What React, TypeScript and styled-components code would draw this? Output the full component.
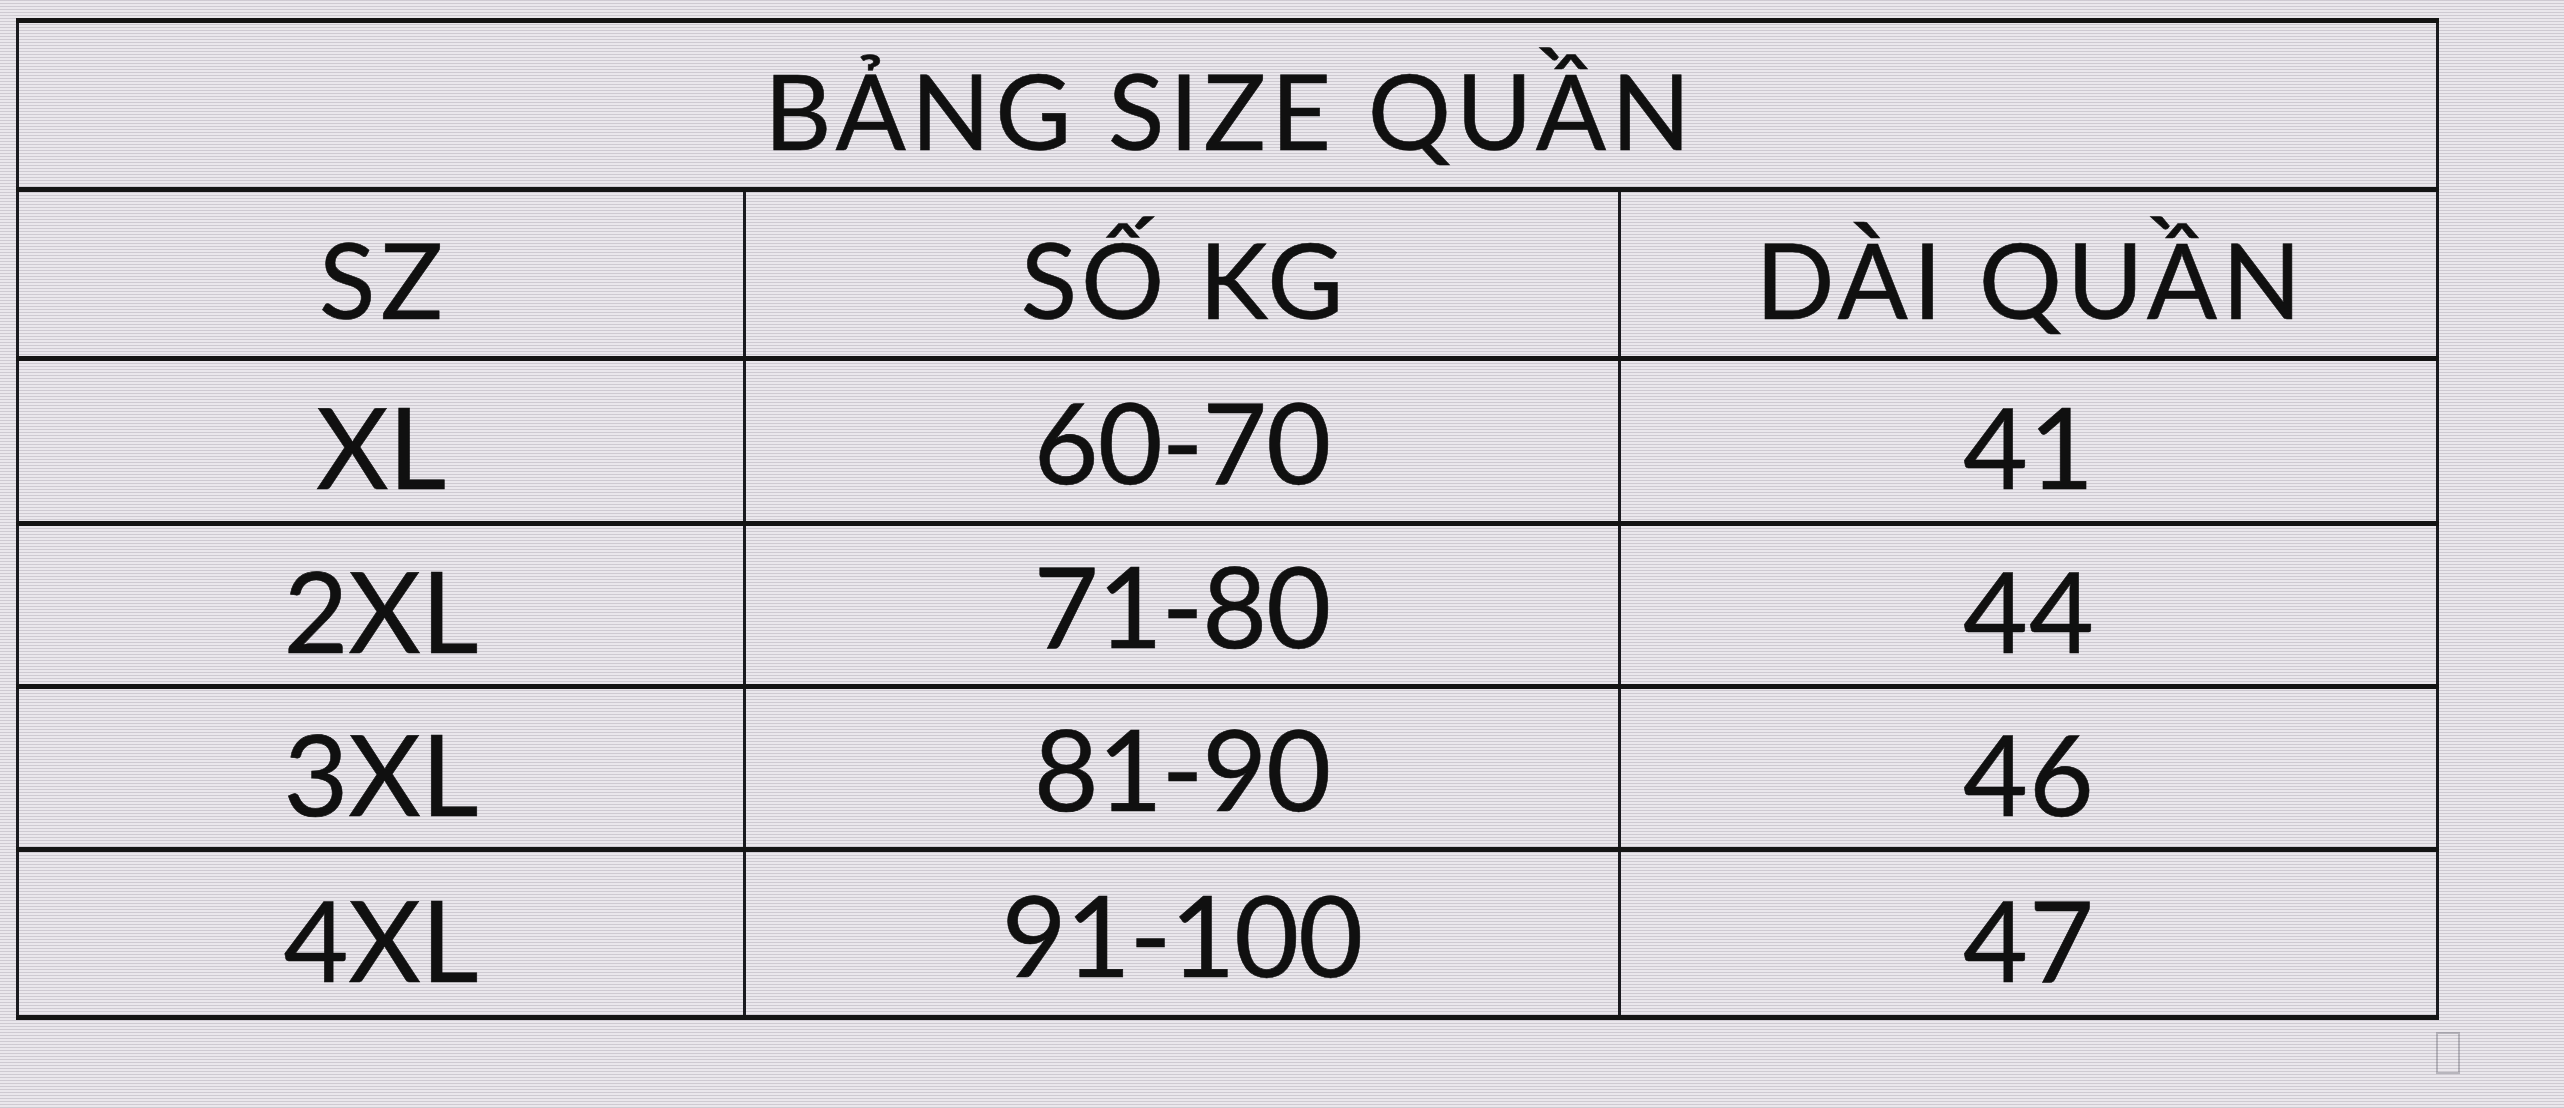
import React from "react";
import styled, { createGlobalStyle } from "styled-components";

const Global = createGlobalStyle`
  html, body {
    margin: 0;
    padding: 0;
    width: 2564px;
    height: 1108px;
    overflow: hidden;
    background-color: #eae7ec;
    background-image: repeating-linear-gradient(
      to bottom,
      rgba(60, 50, 70, 0.16) 0px,
      rgba(60, 50, 70, 0.16) 1px,
      transparent 1px,
      transparent 3px
    );
  }
  #root { height: 100%; }
`;

const Page = styled.div`
  box-sizing: border-box;
  width: 2564px;
  height: 1108px;
  padding: 18px 0 0 16px;
  font-family: "Lato", "Open Sans", "Liberation Sans", sans-serif;
  color: #101010;
`;

const Sheet = styled.table`
  border-collapse: collapse;
  table-layout: fixed;
  width: 2420px;
`;

const Col = styled.col<{ $w: number }>`
  width: ${(p) => p.$w}px;
`;

const Row = styled.tr<{ $h: number }>`
  height: ${(p) => p.$h}px;
`;

const Cell = styled.td<{ $size: number; $track: number }>`
  box-sizing: border-box;
  padding: 10px 0 0 ${(p) => p.$track}px;
  border-top: 5px solid #141414;
  border-bottom: 5px solid #141414;
  border-left: 3px solid #1a1a1f;
  border-right: 3px solid #1a1a1f;
  text-align: center;
  vertical-align: middle;
  font-size: ${(p) => p.$size}px;
  font-weight: 400;
  line-height: 1;
  letter-spacing: ${(p) => p.$track}px;
  white-space: nowrap;
  -webkit-text-stroke: 0.6px #101010;
`;

const Corner = styled.div`
  margin: 12px 0 0 2420px;
  width: 24px;
  height: 42px;
  border: 2px solid rgba(90, 90, 100, 0.35);
  box-sizing: border-box;
`;

const rows: [string, string, string][] = [
  ["XL", "60-70", "41"],
  ["2XL", "71-80", "44"],
  ["3XL", "81-90", "46"],
  ["4XL", "91-100", "47"],
];

const heights = [165, 163, 163, 168];

export default function App() {
  return (
    <>
      <Global />
      <Page>
        <Sheet>
          <colgroup>
            <Col $w={727} />
            <Col $w={875} />
            <Col $w={818} />
          </colgroup>
          <tbody>
            <Row $h={169}>
              <Cell $size={104} $track={5} colSpan={3}>BẢNG SIZE QUẦN</Cell>
            </Row>
            <Row $h={169}>
              <Cell $size={104} $track={5}>SZ</Cell>
              <Cell $size={104} $track={4}>SỐ KG</Cell>
              <Cell $size={104} $track={5}>DÀI QUẦN</Cell>
            </Row>
            {rows.map((r, i) => (
              <Row $h={heights[i]} key={r[0]}>
                <Cell $size={112} $track={0}>{r[0]}</Cell>
                <Cell $size={112} $track={-1}>{r[1]}</Cell>
                <Cell $size={112} $track={1}>{r[2]}</Cell>
              </Row>
            ))}
          </tbody>
        </Sheet>
        <Corner />
      </Page>
    </>
  );
}
